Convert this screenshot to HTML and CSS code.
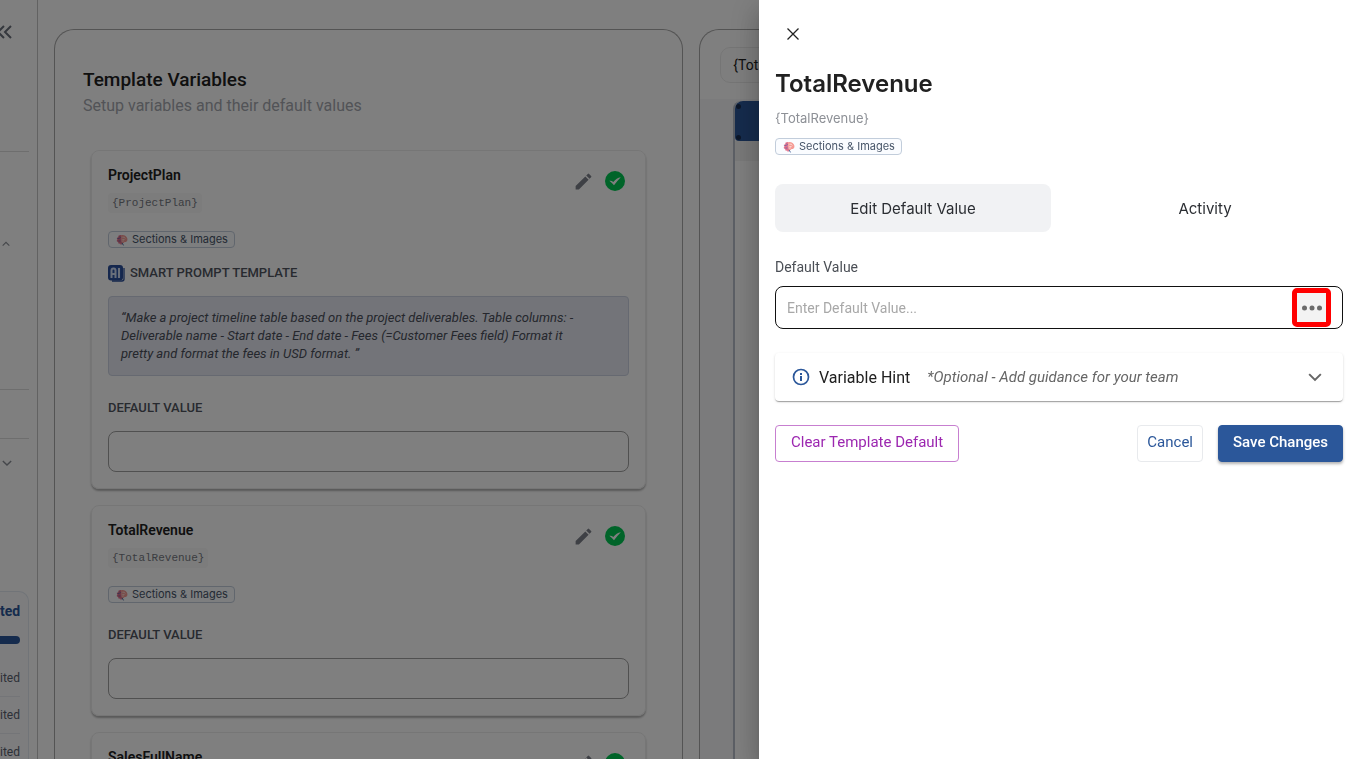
FILE: index.html
```html
<!DOCTYPE html>
<html lang="en">
<head>
    <meta charset="UTF-8">
    <meta name="viewport" content="width=device-width, initial-scale=1.0">
    <title>Template Variables</title>
    <link rel="stylesheet" href="styles.css">
</head>
<body>
    <!-- shared icons -->
    <svg class="sprite" aria-hidden="true">
        <symbol id="brain" viewBox="0 0 12 12">
            <path d="M5 1 2.600 1.600 2.200 3.200.700 4 1.400 5.600.600 7 2.200 8.200 2.700 9.800 4.200 9.400 5 11.300 6 9.600Z" fill="#e2708a"/>
            <path d="M5 1.200C7.500.200 10.800 1.800 11.400 4.700 11.800 7 10.300 8.200 8.600 8.100 7.800 9.600 6.300 9.400 5.800 8.500Z" fill="#f59a94"/>
            <path d="M6.300 3.200h2l1 1.300M6.300 5.600h2.300M6.200 7.200l1.600-.3" fill="none" stroke="#fbd9d4" stroke-width="1"/>
            <path d="M1.600 4.500h2M2.400 7h2M3.600 2.700l1 1.400" fill="none" stroke="#6c6aac" stroke-width=".9"/>
            <path d="M6 8.800l1.500 2.600" fill="none" stroke="#4d6a9c" stroke-width="1"/>
        </symbol>
        <symbol id="pencil" viewBox="0 0 24 24">
            <path d="M3 17.250V21h3.750L17.810 9.940l-3.750-3.750zM20.710 7.040a1 1 0 0 0 0-1.410l-2.340-2.340a1 1 0 0 0-1.410 0l-1.830 1.830 3.750 3.750z" fill="#7d808a"/>
        </symbol>
        <symbol id="check" viewBox="0 0 20 20">
            <circle cx="10" cy="10" r="10" fill="#00c853"/>
            <path d="M4.300 9.800Q6.400 9.200 8.300 11Q11.500 6.800 15.800 6.200Q13 9 9 14.200Q7 12 4.300 9.800Z" fill="#fff"/>
        </symbol>
        <symbol id="chevron" viewBox="0 0 12 12">
            <path d="M1 3.500 6 8.500 11 3.500" fill="none" stroke="currentColor" stroke-width="1.700"/>
        </symbol>
    </svg>

    <div class="page">
        <nav class="sidebar">
            <section class="side-top">
                <button class="icon-btn collapse" aria-label="Collapse menu">
                    <svg width="16" height="14" viewBox="0 0 16 14" fill="none" stroke="#6b717c" stroke-width="2"><path d="M8 1 2 7l6 6M15 1 9 7l6 6"/></svg>
                </button>
            </section>
            <section class="side-menu">
                <button class="icon-btn caret up" aria-label="Close group"><svg width="8" height="8"><use href="#chevron"/></svg></button>
            </section>
            <section class="side-gap"></section>
            <section class="side-group">
                <button class="icon-btn caret" aria-label="Open group"><svg width="10" height="10"><use href="#chevron"/></svg></button>
            </section>
            <section class="usage">
                <p class="usage-title">ted</p>
                <div class="usage-bar"></div>
                <ul>
                    <li>ited</li>
                    <li>ited</li>
                    <li>ited</li>
                </ul>
            </section>
        </nav>

        <main class="content">
            <section class="panel variables">
                <h1>Template Variables</h1>
                <p class="subtitle">Setup variables and their default values</p>

                <div class="card-list">
                    <article class="card">
                        <header>
                            <h2>ProjectPlan</h2>
                            <div class="actions">
                                <button class="icon-btn" aria-label="Edit ProjectPlan"><svg width="21" height="21"><use href="#pencil"/></svg></button>
                                <svg width="20" height="20"><use href="#check"/></svg>
                            </div>
                        </header>
                        <code>{ProjectPlan}</code>
                        <span class="chip"><svg width="12" height="12"><use href="#brain"/></svg>Sections &amp; Images</span>
                        <div class="prompt-title">
                            <svg width="17" height="17" viewBox="0 0 17 17">
                                <rect x="1" y="1" width="13" height="13.500" rx="2" fill="#2f56a6" stroke="#2b4f9a" stroke-width="2"/>
                                <path d="M16 3v11a2 2 0 0 1-2 2H4" fill="none" stroke="#2b4f9a" stroke-width="1.300"/>
                                <path d="M3.500 13V5.500Q3.500 3.500 5.500 3.500T7.500 5.500V13M3.500 9h4M11 3v10" fill="none" stroke="#d3def5" stroke-width="2"/>
                            </svg>
                            <h3>SMART PROMPT TEMPLATE</h3>
                        </div>
                        <p class="prompt">“Make a project timeline table based on the project deliverables. Table columns: - Deliverable name - Start date - End date - Fees (=Customer Fees field) Format it pretty and format the fees in USD format. ”</p>
                        <label for="plan-default">DEFAULT VALUE</label>
                        <input id="plan-default" type="text">
                    </article>

                    <article class="card">
                        <header>
                            <h2>TotalRevenue</h2>
                            <div class="actions">
                                <button class="icon-btn" aria-label="Edit TotalRevenue"><svg width="21" height="21"><use href="#pencil"/></svg></button>
                                <svg width="20" height="20"><use href="#check"/></svg>
                            </div>
                        </header>
                        <code>{TotalRevenue}</code>
                        <span class="chip"><svg width="12" height="12"><use href="#brain"/></svg>Sections &amp; Images</span>
                        <label for="revenue-default">DEFAULT VALUE</label>
                        <input id="revenue-default" type="text">
                    </article>

                    <article class="card">
                        <header>
                            <h2>SalesFullName</h2>
                            <div class="actions">
                                <button class="icon-btn" aria-label="Edit SalesFullName"><svg width="21" height="21"><use href="#pencil"/></svg></button>
                                <svg width="20" height="20"><use href="#check"/></svg>
                            </div>
                        </header>
                    </article>
                </div>
            </section>

            <section class="panel preview">
                <div class="preview-head">
                    <span class="pill">{Tot</span>
                </div>
                <div class="preview-body">
                    <div class="doc">
                        <div class="doc-bar"><i></i><i></i></div>
                        <div class="doc-tools"></div>
                    </div>
                </div>
            </section>
        </main>
    </div>

    <div class="backdrop"></div>

    <aside class="drawer">
        <button class="icon-btn close" aria-label="Close">
            <svg width="12" height="12" viewBox="0 0 12 12" stroke="#222" stroke-width="1.300"><path d="M.5.500l11 11M11.500.500l-11 11"/></svg>
        </button>
        <h1>TotalRevenue</h1>
        <p class="var-name">{TotalRevenue}</p>
        <span class="chip"><svg width="12" height="12"><use href="#brain"/></svg>Sections &amp; Images</span>

        <div class="tabs">
            <button class="tab active">Edit Default Value</button>
            <button class="tab">Activity</button>
        </div>

        <label for="default-value">Default Value</label>
        <div class="field">
            <input id="default-value" type="text" placeholder="Enter Default Value...">
            <button class="more" aria-label="More options">
                <svg width="20" height="6" viewBox="0 0 20 6" fill="#6b6b6b"><circle cx="2.500" cy="3" r="2.500"/><circle cx="10" cy="3" r="2.500"/><circle cx="17.500" cy="3" r="2.500"/></svg>
            </button>
        </div>

        <button class="hint">
            <svg width="18" height="18" viewBox="0 0 18 18" fill="none" stroke="#2b579a" stroke-width="2"><circle cx="9" cy="9" r="7.500" stroke-width="1.700"/><path d="M9 8v5M9 5v2"/></svg>
            <span class="hint-title">Variable Hint</span>
            <em>*Optional - Add guidance for your team</em>
            <svg class="hint-arrow" width="14" height="14"><use href="#chevron"/></svg>
        </button>

        <div class="buttons">
            <button class="btn clear">Clear Template Default</button>
            <button class="btn cancel">Cancel</button>
            <button class="btn save">Save Changes</button>
        </div>
    </aside>
</body>
</html>
```

FILE: styles.css
```css
* {
    box-sizing: border-box;
}

body {
    margin: 0;
    font-family: Roboto, "Liberation Sans", sans-serif;
    color: #212121;
    background: #fff;
    height: 100vh;
    overflow: hidden;
}

h1, h2, h3, p, ul {
    margin: 0;
    padding: 0;
}

button, input {
    font-family: inherit;
}

button {
    cursor: pointer;
}

svg {
    display: block;
    flex: none;
}

.sprite {
    position: absolute;
    width: 0;
    height: 0;
}

.icon-btn {
    display: flex;
    align-items: center;
    justify-content: center;
    padding: 0;
    border: 0;
    background: none;
    color: #8a8e96;
}

.page {
    display: flex;
    height: 100vh;
    overflow: hidden;
}

/* sidebar */
.sidebar {
    flex: none;
    width: 38px;
    padding-right: 8px;
    border-right: 1px solid #c4c4c4;
    overflow: hidden;
}

.sidebar section {
    display: flex;
    justify-content: flex-end;
}

.side-top,
.side-menu,
.side-gap {
    border-bottom: 1px solid #dcdcdc;
}

.side-top {
    height: 152px;
    padding: 25px 17px 0 0;
    align-items: flex-start;
}

.side-menu {
    height: 238px;
    padding: 88px 19px 0 0;
    align-items: flex-start;
}

.side-gap {
    height: 49px;
}

.side-group {
    height: 152px;
    padding: 19px 17px 0 0;
    align-items: flex-start;
}

.caret.up svg {
    transform: rotate(180deg);
}

.sidebar .usage {
    display: block;
    height: 200px;
    padding: 9px 8px 0 0;
    text-align: right;
    border: 1px solid #e2e8f1;
    border-left: 0;
    border-radius: 0 10px 0 0;
    background: #fafbfd;
}

.usage-title {
    font-size: 14px;
    line-height: 20px;
    font-weight: 700;
    color: #2b579a;
}

.usage-bar {
    height: 8px;
    margin: 15px 0 16px;
    border-radius: 0 4px 4px 0;
    background: #2b579a;
}

.usage ul {
    list-style: none;
}

.usage li {
    font-size: 12px;
    line-height: 36px;
    color: #5a6270;
    border-bottom: 1px solid #e8ebf0;
}

/* main */
.content {
    flex: 1;
    display: grid;
    grid-template-columns: minmax(0, 44fr) minmax(0, 45fr);
    gap: 16px;
    padding: 29px 16px 0;
}

.panel {
    border: 1px solid #a8a8a8;
    border-bottom: 0;
    border-radius: 20px 20px 0 0;
    overflow: hidden;
}

.variables {
    padding: 36px 28px 0;
}

.variables h1 {
    font-size: 19px;
    line-height: 28px;
    font-weight: 500;
}

.subtitle {
    font-size: 16px;
    line-height: 24px;
    color: #a4a7ae;
}

.card-list {
    display: flex;
    flex-direction: column;
    gap: 16px;
    padding: 32px 8px 0;
}

.card {
    display: flex;
    flex-direction: column;
    align-items: flex-start;
    padding: 12px 16px 16px;
    border: 1px solid #ededed;
    border-radius: 8px;
    box-shadow: 0 2px 2px rgba(0, 0, 0, 0.3);
}

.card header {
    display: flex;
    justify-content: space-between;
    width: 100%;
    height: 30px;
}

.card h2 {
    font-size: 14px;
    line-height: 24px;
    font-weight: 600;
}

.actions {
    display: flex;
    align-items: center;
    gap: 11px;
    height: 36px;
    padding-right: 4px;
}

.card code {
    padding: 0 4px;
    font-family: "Liberation Mono", monospace;
    font-size: 11px;
    line-height: 20px;
    color: #777a82;
    background: #f8f8f8;
    border-radius: 4px;
}

.chip {
    display: inline-flex;
    align-items: center;
    gap: 4px;
    padding: 0 6px 0 7px;
    font-family: Inter, Roboto, sans-serif;
    font-size: 11px;
    line-height: 15px;
    color: #475569;
    background: #fafcff;
    border: 1px solid #c2cddb;
    border-radius: 4px;
}

.card .chip {
    margin-top: 18px;
}

.prompt-title {
    display: flex;
    align-items: center;
    gap: 5px;
    margin-top: 16px;
}

.card h3,
.card label {
    font-size: 13px;
    line-height: 18px;
    font-weight: 500;
    color: #50555f;
}

.prompt {
    margin-top: 14px;
    padding: 12px 36px 12px 12px;
    font-size: 13px;
    line-height: 18px;
    font-style: italic;
    color: #4a4f5a;
    background: #e6e8f2;
    border: 1px solid #cdd3e2;
    border-radius: 4px;
}

.card label {
    margin: 23px 0 14px;
}

.card input {
    width: 100%;
    height: 41px;
    padding: 0 12px;
    border: 1px solid #a0a0a0;
    border-radius: 8px;
    background: #fff;
}

/* preview */
.preview {
    display: flex;
    flex-direction: column;
}

.preview-head {
    padding: 17px 20px 16px;
}

.pill {
    display: block;
    padding: 0 12px;
    font-size: 14px;
    line-height: 34px;
    border: 1px solid #ebebeb;
    border-radius: 10px;
    background: #fcfcfc;
}

.preview-body {
    flex: 1;
    padding: 2px 33px 0;
    background: #f6f7f8;
}

.doc {
    height: 100%;
    border-left: 2px solid #b8bfca;
    border-radius: 8px 0 0 0;
    background: #fff;
}

.doc-bar {
    display: flex;
    flex-direction: column;
    justify-content: space-between;
    height: 40px;
    padding: 3px 1px 1px;
    border-radius: 8px 0 0 4px;
    background: #2b579a;
}

.doc-bar i {
    width: 5px;
    height: 5px;
    border-radius: 50%;
    background: #182c50;
}

.doc-tools {
    height: 20px;
    background: #f3f3f3;
}

/* drawer */
.backdrop {
    position: fixed;
    inset: 0;
    background: rgba(0, 0, 0, 0.5);
}

.drawer {
    position: fixed;
    top: 0;
    right: 0;
    bottom: 0;
    width: 600px;
    max-width: 100%;
    padding: 16px;
    display: flex;
    flex-direction: column;
    align-items: flex-start;
    background: #fff;
    box-shadow: 0 8px 10px -5px rgba(0, 0, 0, 0.2), 0 16px 24px 2px rgba(0, 0, 0, 0.14), 0 6px 30px 5px rgba(0, 0, 0, 0.12);
}

.close {
    width: 36px;
    height: 36px;
}

.drawer h1 {
    margin-top: 16px;
    font-family: Inter, Roboto, sans-serif;
    font-size: 24px;
    line-height: 32px;
    font-weight: 600;
}

.var-name {
    margin: 8px 0 10px;
    font-family: Inter, Roboto, sans-serif;
    font-size: 13px;
    line-height: 20px;
    color: #8d9096;
}

.tabs {
    display: grid;
    grid-template-columns: 1fr 1fr;
    gap: 16px;
    width: 100%;
    margin: 29px 0 24px;
}

.tab {
    height: 48px;
    font-family: Inter, Roboto, sans-serif;
    font-size: 15px;
    color: #2b2e33;
    background: none;
    border: 0;
    border-radius: 8px;
}

.tab.active {
    background: #f1f2f4;
}

.drawer label {
    font-size: 14px;
    line-height: 22px;
    color: #4b4f56;
}

.field {
    display: flex;
    align-items: center;
    width: 100%;
    height: 43px;
    margin: 8px 0 24px;
    padding: 0 11px;
    border: 1px solid #111;
    border-radius: 8px;
}

.field input {
    flex: 1;
    min-width: 0;
    padding: 0;
    font-size: 14px;
    border: 0;
    outline: 0;
    background: none;
}

.field input::placeholder {
    color: #a8a8a8;
}

.more {
    display: flex;
    align-items: center;
    justify-content: center;
    width: 39px;
    height: 39px;
    padding: 0;
    border: 5px solid #f00;
    border-radius: 5px;
    background: #f3f3f3;
}

.hint {
    display: flex;
    align-items: center;
    width: 100%;
    height: 48px;
    padding: 0 21px 0 17px;
    text-align: left;
    background: #fff;
    border: 0;
    border-radius: 4px;
    box-shadow: 0 2px 1px -1px rgba(0, 0, 0, 0.2), 0 1px 1px rgba(0, 0, 0, 0.14), 0 1px 3px rgba(0, 0, 0, 0.12);
}

.hint-title {
    margin: 0 17px 0 9px;
    font-size: 16px;
    color: #212121;
}

.hint em {
    font-size: 15px;
    color: #666;
}

.hint-arrow {
    margin-left: auto;
    color: #666;
}

.buttons {
    display: flex;
    gap: 15px;
    width: 100%;
    margin-top: 24px;
}

.btn {
    height: 37px;
    padding: 0 14px 3px;
    font-size: 15px;
    border: 1px solid #c77fd0;
    border-radius: 4px;
    background: #fff;
}

.clear {
    margin-right: auto;
    padding: 0 15px 3px;
    color: #9c27b0;
}

.cancel {
    padding: 0 9px 3px;
    color: #2b579a;
    border-color: #e8eaed;
}

.save {
    color: #fff;
    font-weight: 500;
    background: #2b579a;
    border-color: #2b579a;
    box-shadow: 0 2px 3px rgba(0, 0, 0, 0.3);
}
```
